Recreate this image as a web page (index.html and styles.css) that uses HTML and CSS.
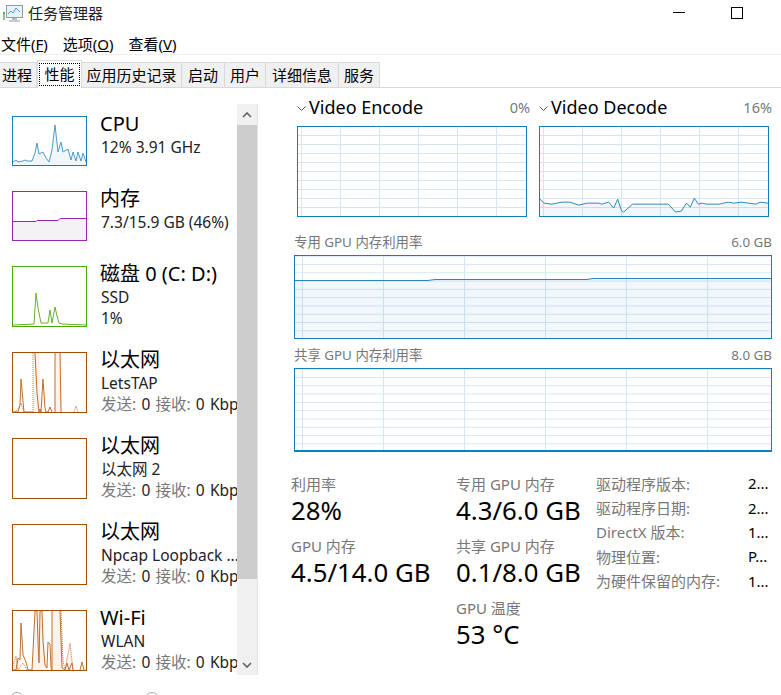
FILE: index.html
```html
<!DOCTYPE html>
<html lang="zh-CN">
<head>
    <meta charset="UTF-8">
    <title>任务管理器</title>
    <link rel="stylesheet" href="styles.css">
</head>
<body>
    <div class="titlebar">
        <svg class="app-icon" width="20" height="18" viewBox="0 0 20 18">
            <rect x="0" y="7" width="2" height="8" fill="#9ab89a"/>
            <rect x="0" y="7" width="2" height="2" fill="#4fb04f"/>
            <rect x="3.5" y="0.5" width="16" height="12" fill="#e6f3fb" stroke="#8f9aa3"/>
            <polyline points="5,9 8,6 10,8 13,3 17,7" fill="none" stroke="#3f9fd8"/>
            <rect x="9" y="13" width="5" height="2" fill="#b5bcc2"/>
            <rect x="6" y="15" width="11" height="2" fill="#c9ced2"/>
        </svg>
        <span class="app-title">任务管理器</span>
        <div class="window-btns">
            <span class="btn-min"></span>
            <span class="btn-max"></span>
        </div>
    </div>

    <div class="menubar">
        <span>文件(<u>F</u>)</span>
        <span>选项(<u>O</u>)</span>
        <span>查看(<u>V</u>)</span>
    </div>

    <div class="tabs">
        <div class="tab tab-first">进程</div>
        <div class="tab active"><span class="focus">性能</span></div>
        <div class="tab">应用历史记录</div>
        <div class="tab">启动</div>
        <div class="tab">用户</div>
        <div class="tab">详细信息</div>
        <div class="tab">服务</div>
    </div>

    <div class="main">
        <div class="sidebar">
            <div class="perf-list">
                <div class="item">
                    <svg class="thumb thumb-cpu" viewBox="0 0 73 48" preserveAspectRatio="none">
                        <polygon class="fill" points="0,45 3,43 5,45 10,44 12,43 14,44 19,44 22,36 24,26 26,37 30,35 33,41 36,45 39,33 42,8 45,35 48,25 50,35 55,32 58,43 60,35 63,44 65,35 68,44 70,36 73,45 73,48 0,48"/>
                        <polyline class="line" points="0,45 3,43 5,45 10,44 12,43 14,44 19,44 22,36 24,26 26,37 30,35 33,41 36,45 39,33 42,8 45,35 48,25 50,35 55,32 58,43 60,35 63,44 65,35 68,44 70,36 73,45"/>
                    </svg>
                    <div class="info">
                        <div class="name">CPU</div>
                        <div class="sub">12% 3.91 GHz</div>
                    </div>
                </div>
                <div class="item">
                    <svg class="thumb thumb-mem" viewBox="0 0 73 48" preserveAspectRatio="none">
                        <polygon class="fill" points="0,29 23,29 24,28 45,28 47,26 73,26 73,48 0,48"/>
                        <polyline class="line" points="0,29.5 23,29.5 24,28.5 45,28.5 47,26.5 73,26.5"/>
                    </svg>
                    <div class="info">
                        <div class="name">内存</div>
                        <div class="sub">7.3/15.9 GB (46%)</div>
                    </div>
                </div>
                <div class="item item-tall">
                    <svg class="thumb thumb-disk" viewBox="0 0 73 59" preserveAspectRatio="none">
                        <polygon class="fill" points="0,58 21,57 23,26 25,41 28,56 35,56 37,43 39,56 40,51 42,40 44,49 46,56 49,57 73,58"/>
                        <polyline class="line" points="0,58 21,57 23,26 25,41 28,56 35,56 37,43 39,56 40,51 42,40 44,49 46,56 49,57 73,58"/>
                    </svg>
                    <div class="info">
                        <div class="name">磁盘 0 (C: D:)</div>
                        <div class="sub">SSD</div>
                        <div class="sub">1%</div>
                    </div>
                </div>
                <div class="item item-tall">
                    <svg class="thumb thumb-net" viewBox="0 0 73 59" preserveAspectRatio="none">
                        <polygon class="fill" points="20,59 21,0 26,0 28,59"/>
                        <polygon class="fill" points="42,59 42,0 48,0 49,59"/>
                        <polyline class="line" points="0,59 5,59 7,52 8,26 10,48 11,59 20,59"/>
                        <polyline class="line" points="22,0 24,40 26,59 27,56 28,59 30,26 32,55 33,59 35,59 37,54 39,59"/>
                        <polyline class="line" points="42,59 42,0"/>
                        <polyline class="line" points="47,0 48,59"/>
                        <polyline class="dots" points="20,59 20,0"/>
                        <polyline class="dots" points="2,59 5,56 8,50 11,59"/>
                        <polyline class="dots" points="61,59 63,53 65,59"/>
                    </svg>
                    <div class="info">
                        <div class="name">以太网</div>
                        <div class="sub">LetsTAP</div>
                        <div class="sub sub-rate"><span class="muted">发送:</span> 0 <span class="muted">接收:</span> 0 Kbps</div>
                    </div>
                </div>
                <div class="item item-tall">
                    <svg class="thumb thumb-net" viewBox="0 0 73 59"></svg>
                    <div class="info">
                        <div class="name">以太网</div>
                        <div class="sub">以太网 2</div>
                        <div class="sub sub-rate"><span class="muted">发送:</span> 0 <span class="muted">接收:</span> 0 Kbps</div>
                    </div>
                </div>
                <div class="item item-tall">
                    <svg class="thumb thumb-net" viewBox="0 0 73 59"></svg>
                    <div class="info">
                        <div class="name">以太网</div>
                        <div class="sub">Npcap Loopback ...</div>
                        <div class="sub sub-rate"><span class="muted">发送:</span> 0 <span class="muted">接收:</span> 0 Kbps</div>
                    </div>
                </div>
                <div class="item item-tall">
                    <svg class="thumb thumb-net" viewBox="0 0 73 59" preserveAspectRatio="none">
                        <polygon class="fill" points="19,59 22,0 30,0 34,59"/>
                        <polygon class="fill" points="39,59 39,0 48,0 50,59"/>
                        <polygon class="fill" points="0,59 3,46 5,59"/>
                        <polygon class="fill" points="52,59 57,32 60,59"/>
                        <polyline class="line" points="0,59 3,59 5,47 7,49 8,12 10,44 13,51 15,59 19,59 22,0 24,0 25,30 26,52 27,0 29,0 30,30 32,54 34,57 35,31 37,33 38,57 39,59 39,0"/>
                        <polyline class="line" points="47,0 49,57 52,59 54,52 56,59 59,52 60,59"/>
                        <polyline class="line" points="67,59 69,51 71,59"/>
                        <polyline class="dots" points="0,55 3,45 5,59 10,52 14,59"/>
                        <polyline class="dots" points="48,0 50,50 52,59 57,32 60,59"/>
                    </svg>
                    <div class="info">
                        <div class="name">Wi-Fi</div>
                        <div class="sub">WLAN</div>
                        <div class="sub sub-rate"><span class="muted">发送:</span> 0 <span class="muted">接收:</span> 0 Kbps</div>
                    </div>
                </div>
            </div>
            <div class="scrollbar">
                <div class="scroll-btn">
                    <svg width="10" height="6" viewBox="0 0 10 6"><polyline points="1,5 5,1 9,5" fill="none" stroke="#606060" stroke-width="1.6"/></svg>
                </div>
                <div class="scroll-thumb"></div>
                <div class="scroll-track"></div>
                <div class="scroll-btn">
                    <svg width="10" height="6" viewBox="0 0 10 6"><polyline points="1,1 5,5 9,1" fill="none" stroke="#606060" stroke-width="1.6"/></svg>
                </div>
            </div>
        </div>

        <div class="detail">
            <div class="video-row">
                <div class="video-col">
                    <div class="video-head">
                        <svg class="chevron" width="9" height="5" viewBox="0 0 9 5"><polyline points="0.5,0.5 4.5,4.5 8.5,0.5" fill="none" stroke="#555"/></svg>
                        <span class="video-name">Video Encode</span>
                        <span class="video-pct">0%</span>
                    </div>
                    <div class="graph graph-small"></div>
                </div>
                <div class="video-col">
                    <div class="video-head">
                        <svg class="chevron" width="9" height="5" viewBox="0 0 9 5"><polyline points="0.5,0.5 4.5,4.5 8.5,0.5" fill="none" stroke="#555"/></svg>
                        <span class="video-name">Video Decode</span>
                        <span class="video-pct">16%</span>
                    </div>
                    <div class="graph graph-small">
                        <svg class="plot" viewBox="0 0 229 90" preserveAspectRatio="none">
                            <polygon class="plot-fill" points="0,73 4,77 12,78 22,76 30,76 39,79 47,77 59,77 62,78 69,76 74,82 78,73 82,85 84,86 93,78 129,78 136,86 142,85 147,77 151,81 155,72 159,78 163,77 167,78 180,78 189,76 195,77 202,76 217,78 221,76 229,77 229,90 0,90"/>
                            <polyline class="plot-line" points="0,73 4,77 12,78 22,76 30,76 39,79 47,77 59,77 62,78 69,76 74,82 78,73 82,85 84,86 93,78 129,78 136,86 142,85 147,77 151,81 155,72 159,78 163,77 167,78 180,78 189,76 195,77 202,76 217,78 221,76 229,77"/>
                        </svg>
                    </div>
                </div>
            </div>

            <div class="graph-head graph-head-first">
                <span>专用 GPU 内存利用率</span>
                <span>6.0 GB</span>
            </div>
            <div class="graph graph-wide">
                <svg class="plot" viewBox="0 0 476 82" preserveAspectRatio="none">
                    <polygon class="plot-fill" points="0,24 133,24 140,23 292,23 298,22 476,22 476,82 0,82"/>
                    <polyline class="plot-line" points="0,24.5 133,24.5 140,23.5 292,23.5 298,22.5 476,22.5"/>
                </svg>
            </div>

            <div class="graph-head">
                <span>共享 GPU 内存利用率</span>
                <span>8.0 GB</span>
            </div>
            <div class="graph graph-wide graph-floor"></div>

            <div class="stats">
                <div class="stat-col stat-col-1">
                    <div class="stat">
                        <div class="stat-label">利用率</div>
                        <div class="stat-value">28%</div>
                    </div>
                    <div class="stat">
                        <div class="stat-label">GPU 内存</div>
                        <div class="stat-value">4.5/14.0 GB</div>
                    </div>
                </div>
                <div class="stat-col stat-col-2">
                    <div class="stat">
                        <div class="stat-label">专用 GPU 内存</div>
                        <div class="stat-value">4.3/6.0 GB</div>
                    </div>
                    <div class="stat">
                        <div class="stat-label">共享 GPU 内存</div>
                        <div class="stat-value">0.1/8.0 GB</div>
                    </div>
                    <div class="stat">
                        <div class="stat-label">GPU 温度</div>
                        <div class="stat-value">53 °C</div>
                    </div>
                </div>
                <div class="props">
                    <span class="prop-key">驱动程序版本:</span><span>2...</span>
                    <span class="prop-key">驱动程序日期:</span><span>2...</span>
                    <span class="prop-key">DirectX 版本:</span><span>1...</span>
                    <span class="prop-key">物理位置:</span><span>P...</span>
                    <span class="prop-key">为硬件保留的内存:</span><span>1...</span>
                </div>
            </div>
        </div>
    </div>

    <div class="footer">
        <span class="footer-icon"></span>
        <span class="footer-icon footer-icon-2"></span>
    </div>
</body>
</html>
```

FILE: styles.css
```css
html, body {
    margin: 0;
    height: 695px;
    overflow: hidden;
    background-color: #fff;
}
body {
    font-family: "Noto Sans", "Noto Sans CJK SC", sans-serif;
    font-size: 14px;
    color: #000;
}

/* window chrome */
.titlebar {
    height: 28px;
    box-sizing: border-box;
    display: flex;
    align-items: center;
    padding: 0 0 3px 3px;
}
.app-icon { margin: 2px 5px 0 0; }
.app-title { font-size: 15px; color: #222; }
.window-btns {
    margin-left: auto;
    display: flex;
    align-items: center;
    gap: 46px;
    padding-right: 38px;
}
.btn-min { width: 12px; height: 1px; background-color: #000; }
.btn-max { width: 10px; height: 10px; border: 1px solid #000; }

.menubar {
    height: 27px;
    display: flex;
    align-items: center;
    gap: 15px;
    padding: 5px 0 0 1px;
    box-sizing: border-box;
    border-bottom: 1px solid #f0f0f0;
    font-size: 15px;
}

.tabs {
    height: 33px;
    box-sizing: border-box;
    display: grid;
    grid-template-columns: 37px 45px 100px 43px 41px 73px 41px;
    justify-content: start;
    align-items: end;
    border-bottom: 1px solid #d9d9d9;
}
.tab {
    height: 25px;
    box-sizing: border-box;
    font-size: 15px;
    line-height: 24px;
    text-align: center;
    background-color: #f0f0f0;
    border: 1px solid #d9d9d9;
    border-bottom: none;
    border-left: none;
}
.tab-first { text-align: left; padding-left: 2px; }
.tab.active {
    height: 28px;
    margin-bottom: -1px;
    background-color: #fff;
    border-left: 1px solid #d9d9d9;
    padding: 2px 1px 0;
    line-height: 22px;
    position: relative;
    z-index: 1;
}
.focus {
    display: block;
    height: 23px;
    outline: 1px dotted #000;
    outline-offset: -1px;
}

.main { display: flex; height: 604px; }

/* left list */
.sidebar {
    width: 258px;
    flex: none;
    box-sizing: border-box;
    display: flex;
    padding-top: 16px;
}
.perf-list {
    width: 237px;
    height: 571px;
    box-sizing: border-box;
    padding: 6px 0 0 12px;
    overflow: hidden;
}
.item { display: flex; height: 75px; }
.item-tall { height: 86px; }
.thumb {
    width: 75px;
    height: 50px;
    flex: none;
    box-sizing: border-box;
    margin-top: 6px;
    border: 1px solid;
    display: block;
}
.item-tall .thumb { height: 61px; }
.thumb-cpu { border-color: #117dbb; --line: #4b9cc9; --fill: #f1f6fa; }
.thumb-mem { border-color: #9528b4; --line: #9528b4; --fill: #f4f2f4; }
.thumb-disk { border-color: #4da60c; --line: #68b030; --fill: #fff; }
.thumb-net { border-color: #a74f01; --line: #c0702c; --fill: #fcf3ec; }
.fill { fill: var(--fill); }
.line { fill: none; stroke: var(--line); stroke-width: 1; }
.dots { fill: none; stroke: #d0703a; stroke-width: 1; stroke-dasharray: 1 1; }
.info {
    margin-left: 14px;
    white-space: nowrap;
}
.name { font-size: 20px; line-height: 27px; margin-left: -1px; }
.sub { font-size: 15.5px; line-height: 21px; color: #222; }
.sub-rate { word-spacing: 1.2px; }
.muted { color: #777; }

.scrollbar {
    width: 20px;
    height: 571px;
    background-color: #f0f0f0;
    display: flex;
    flex-direction: column;
    border-right: 1px solid #e3e3e3;
}
.scroll-btn {
    height: 21px;
    display: flex;
    align-items: center;
    justify-content: center;
    flex: none;
}
.scroll-thumb { height: 454px; background-color: #cdcdcd; }
.scroll-track { flex: 1; }

/* right panel */
.detail {
    flex: 1;
    padding: 9px 9px 0 36px;
    min-width: 0;
}
.video-row {
    display: flex;
    gap: 9px;
    padding-left: 3px;
}
.video-col { width: 233px; }
.video-head {
    display: flex;
    align-items: center;
    height: 20px;
    margin-bottom: 9px;
}
.chevron { margin: 2px 3px 0 0; flex: none; }
.video-name { font-size: 18px; }
.video-pct { margin-left: auto; font-size: 14.5px; color: #777; }

.graph {
    box-sizing: border-box;
    border: 1px solid #117dbb;
    background-image:
        linear-gradient(to right, #d5e7f3 1px, transparent 1px),
        linear-gradient(to bottom, #d5e7f3 1px, transparent 1px);
    position: relative;
}
.graph-small {
    width: 230px;
    height: 91px;
    background-size: 39px 100%, 100% 9px;
    background-position: 3px 0, 0 8px;
}
.graph-wide {
    height: 84px;
    background-size: 81px 100%, 100% 8.3px;
    background-position: 7px 0, 0 8px;
}
.graph-floor { border-bottom-width: 2px; }
.plot {
    position: absolute;
    inset: 0;
    width: 100%;
    height: 100%;
}
.plot-fill { fill: rgba(17, 125, 187, 0.06); }
.plot-line { fill: none; stroke: #2a88c0; stroke-width: 1; }

.graph-head {
    display: flex;
    justify-content: space-between;
    font-size: 13.4px;
    line-height: 20px;
    color: #777;
    margin: 6px 0 3px;
}
.graph-head-first { margin-top: 15px; }

.stats {
    display: flex;
    margin: 23px 0 0 -3px;
}
.stat-col-1 { width: 165px; }
.stat-col-2 { width: 140px; }
.stat { margin-bottom: 10px; }
.stat-label { font-size: 15px; line-height: 19px; color: #777; }
.stat-value { font-size: 25.8px; line-height: 33px; white-space: nowrap; }
.props {
    display: grid;
    grid-template-columns: 152px auto;
    grid-auto-rows: 24.4px;
    align-items: center;
    margin-top: -4px;
    font-size: 15px;
    white-space: nowrap;
}
.prop-key { color: #777; }

.footer {
    padding-left: 10px;
    display: flex;
}
.footer-icon {
    width: 12px;
    height: 12px;
    border: 1px solid #aaa;
    border-radius: 50%;
}
.footer-icon-2 { margin-left: 121px; }
```
